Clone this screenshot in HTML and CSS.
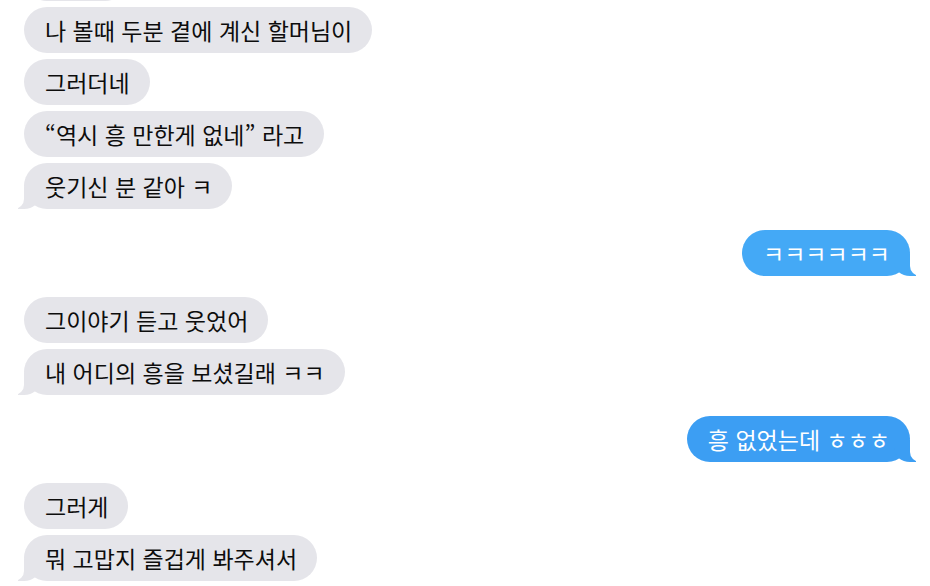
FILE: index.html
```html
<!DOCTYPE html>
<html lang="ko">
<head>
  <meta charset="UTF-8">
  <meta name="viewport" content="width=device-width, initial-scale=1.0">
  <title>메시지</title>
  <link rel="stylesheet" href="styles.css">
</head>
<body>
  <div class="chat">
    <!-- 받은 메시지 -->
    <div class="group them">
      <div class="bubble">맞아요</div>
      <div class="bubble">나 볼때 두분 곁에 계신 할머님이</div>
      <div class="bubble">그러더네</div>
      <div class="bubble">“역시 흥 만한게 없네” 라고</div>
      <div class="bubble tail">웃기신 분 같아 ㅋ</div>
    </div>

    <!-- 보낸 메시지 -->
    <div class="group me">
      <div class="bubble tail">ㅋㅋㅋㅋㅋㅋ</div>
    </div>

    <div class="group them">
      <div class="bubble">그이야기 듣고 웃었어</div>
      <div class="bubble tail">내 어디의 흥을 보셨길래 ㅋㅋ</div>
    </div>

    <div class="group me">
      <div class="bubble tail deep">흥 없었는데 ㅎㅎㅎ</div>
    </div>

    <div class="group them">
      <div class="bubble">그러게</div>
      <div class="bubble tail">뭐 고맙지 즐겁게 봐주셔서</div>
    </div>
  </div>
</body>
</html>
```

FILE: styles.css
```css
body {
  margin: 0;
  padding: 0 20px 0 24px;
  background: #ffffff;
  font-family: "Noto Sans CJK KR", "Noto Sans", sans-serif;
  overflow: hidden;
  height: 586px;
}
.chat {
  display: flex;
  flex-direction: column;
  gap: 21px;
  margin-top: -45px;
}
.group {
  display: flex;
  flex-direction: column;
  gap: 6px;
}
.them {
  align-items: flex-start;
}
.me {
  align-items: flex-end;
}
.bubble {
  position: relative;
  height: 46px;
  line-height: 46px;
  padding: 0 20px 0 21px;
  border-radius: 23px;
  font-size: 23px;
  white-space: nowrap;
}
.them .bubble {
  background: #e5e5ea;
  color: #0d0d0d;
}
.me .bubble {
  background: #44a9f6;
  color: #ffffff;
}
.me .bubble.deep {
  background: #3c9ef3;
}

/* 말풍선 꼬리 */
.bubble.tail::before,
.bubble.tail::after {
  content: "";
  position: absolute;
  bottom: 0;
  height: 22px;
}
.them .bubble.tail::before {
  left: -6px;
  width: 22px;
  background: #e5e5ea;
  border-bottom-right-radius: 16px 14px;
}
.them .bubble.tail::after {
  left: -10px;
  width: 10px;
  background: #ffffff;
  border-bottom-right-radius: 10px;
}
.me .bubble.tail::before {
  right: -6px;
  width: 22px;
  background: inherit;
  border-bottom-left-radius: 16px 14px;
}
.me .bubble.tail::after {
  right: -10px;
  width: 10px;
  background: #ffffff;
  border-bottom-left-radius: 10px;
}
```
